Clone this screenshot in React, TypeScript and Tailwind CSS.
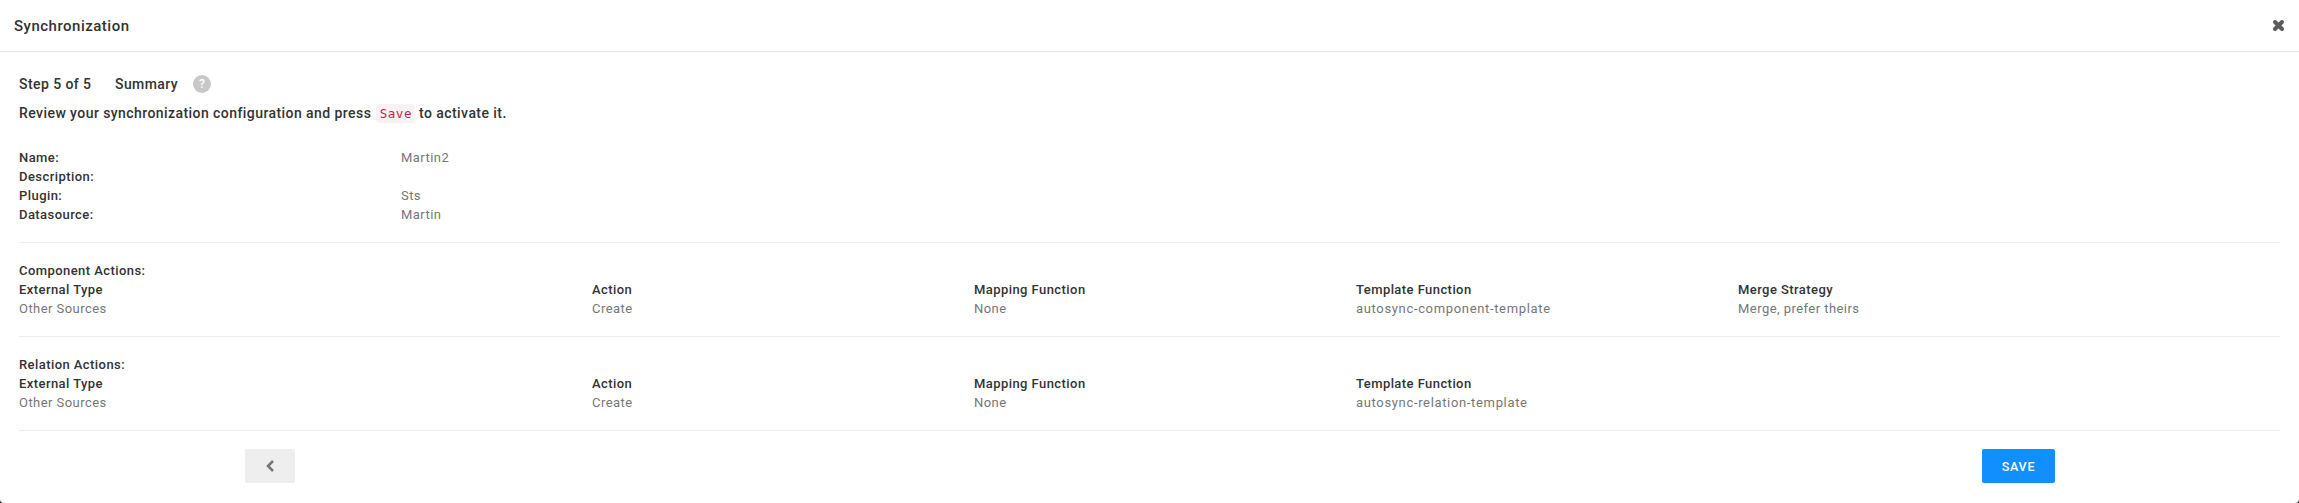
import React from "react";

type Cell = { title: string; value: string };

const details: Cell[] = [
  { title: "Name:", value: "Martin2" },
  { title: "Description:", value: "" },
  { title: "Plugin:", value: "Sts" },
  { title: "Datasource:", value: "Martin" },
];

const componentActions: Cell[] = [
  { title: "External Type", value: "Other Sources" },
  { title: "Action", value: "Create" },
  { title: "Mapping Function", value: "None" },
  { title: "Template Function", value: "autosync-component-template" },
  { title: "Merge Strategy", value: "Merge, prefer theirs" },
];

const relationActions: Cell[] = [
  { title: "External Type", value: "Other Sources" },
  { title: "Action", value: "Create" },
  { title: "Mapping Function", value: "None" },
  { title: "Template Function", value: "autosync-relation-template" },
];

function ActionSection({ heading, cells }: { heading: string; cells: Cell[] }) {
  return (
    <section className="h-[94px] border-b border-[#ececec] pt-[18px]">
      <h3 className="font-medium tracking-[0.43px] text-[#333]">{heading}</h3>
      <div className="grid grid-cols-[573px_382px_382px_382px_1fr]">
        {cells.map((cell) => (
          <div key={cell.title}>
            <div className="font-medium tracking-[0.43px] text-[#333]">{cell.title}</div>
            <div className={cell.value.includes("-") ? "tracking-[0.66px] text-[#777]" : "text-[#777]"}>{cell.value}</div>
          </div>
        ))}
      </div>
    </section>
  );
}

export default function App() {
  return (
    <div className="bg-[#333]">
      <div className="flex h-[503px] w-full flex-col overflow-hidden rounded-b-[4px] bg-white font-['Roboto',sans-serif] text-[13px] leading-[19px] tracking-[0.45px]">
        <header className="flex h-[52px] shrink-0 items-center justify-between border-b border-[#e2e2e2] pr-[14px] pl-[14px]">
          <h1 className="pt-px text-[15px] font-medium tracking-[0.5px] text-[#333]">Synchronization</h1>
          <button aria-label="Close" className="text-[#5c5c5c]">
            <svg width="13" height="13" viewBox="0 0 13 13" className="block">
              <path d="M3 3L10 10M10 3L3 10" stroke="currentColor" strokeWidth="4" strokeLinecap="round" />
            </svg>
          </button>
        </header>
        <main className="flex grow flex-col px-[19px]">
          <div className="mt-[22px] flex h-5 items-center text-[14px] font-medium tracking-[0.43px] text-[#333]">
            <span className="w-[96px]">Step 5 of 5</span>
            <span className="w-[78px]">Summary</span>
            <span className="flex size-[18px] items-center justify-center rounded-full bg-[#c8c8c8] text-[12px] tracking-normal text-white">?</span>
          </div>
          <p className="mt-[9px] flex h-5 items-center text-[14px] font-medium tracking-[0.43px] whitespace-pre text-[#333]">
            <span>Review your synchronization configuration and press </span>
            <code className="ml-px h-[19px] w-[39px] rounded-[4px] bg-[#f9f2f4] pl-[3.5px] font-['DejaVu_Sans_Mono',monospace] text-[12.6px] leading-[19px] font-normal tracking-[0.5px] text-[#c7254e]">Save</code>
            <span> to activate it.</span>
          </p>
          <dl className="mt-[25px] h-[95px] border-b border-[#ececec]">
            {details.map((row) => (
              <div key={row.title} className="grid h-[19px] grid-cols-[382px_1fr]">
                <dt className="font-medium tracking-[0.43px] text-[#333]">{row.title}</dt>
                <dd className="text-[#777]">{row.value}</dd>
              </div>
            ))}
          </dl>
          <ActionSection heading="Component Actions:" cells={componentActions} />
          <ActionSection heading="Relation Actions:" cells={relationActions} />
          <footer className="mt-[18px] flex justify-between pr-[225px] pl-[226px]">
            <button aria-label="Previous step" className="flex h-[34px] w-[50px] items-center justify-center rounded-[2px] bg-[#eee] text-[#777]">
              <svg width="9" height="12" viewBox="0 0 9 12" className="block">
                <path d="M7 1L2 6L7 11" fill="none" stroke="currentColor" strokeWidth="2.6" />
              </svg>
            </button>
            <button className="h-[34px] w-[73px] rounded-[2px] bg-[#128fff] pt-px text-[12.5px] font-medium tracking-[0.8px] text-white">SAVE</button>
          </footer>
        </main>
      </div>
    </div>
  );
}
